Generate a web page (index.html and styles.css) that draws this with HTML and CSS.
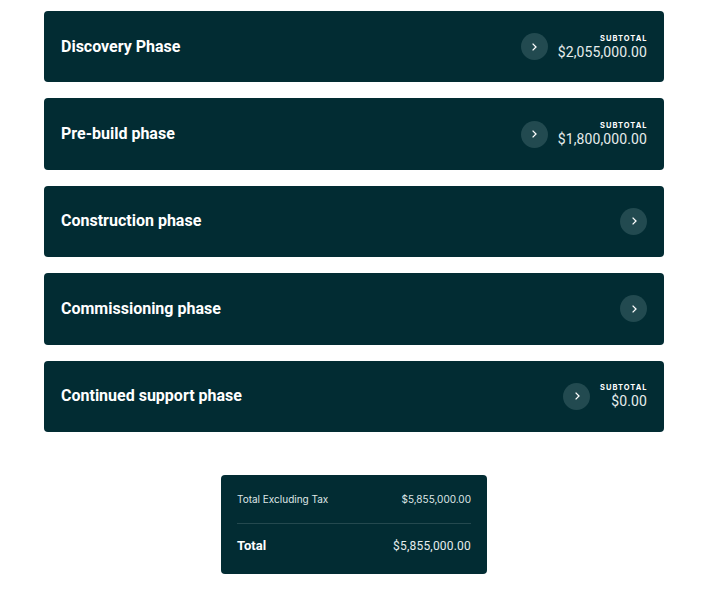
FILE: index.html
```html
<!DOCTYPE html>
<html lang="en">
<head>
<meta charset="utf-8">
<title>Phases</title>
<link rel="stylesheet" href="styles.css">
</head>
<body>
<main class="page">
  <section class="phases">
    <article class="phase">
      <h2 class="phase-title">Discovery Phase</h2>
      <div class="phase-side">
        <span class="chev"><svg viewBox="0 0 10 10" width="10" height="10"><path d="M3.6 1.6 7 5 3.6 8.4" fill="none" stroke="currentColor" stroke-width="1.3"/></svg></span>
        <div class="sub"><span class="sub-label">SUBTOTAL</span><span class="sub-value">$2,055,000.00</span></div>
      </div>
    </article>
    <article class="phase">
      <h2 class="phase-title">Pre-build phase</h2>
      <div class="phase-side">
        <span class="chev"><svg viewBox="0 0 10 10" width="10" height="10"><path d="M3.6 1.6 7 5 3.6 8.4" fill="none" stroke="currentColor" stroke-width="1.3"/></svg></span>
        <div class="sub"><span class="sub-label">SUBTOTAL</span><span class="sub-value">$1,800,000.00</span></div>
      </div>
    </article>
    <article class="phase">
      <h2 class="phase-title">Construction phase</h2>
      <div class="phase-side">
        <span class="chev"><svg viewBox="0 0 10 10" width="10" height="10"><path d="M3.6 1.6 7 5 3.6 8.4" fill="none" stroke="currentColor" stroke-width="1.3"/></svg></span>
      </div>
    </article>
    <article class="phase">
      <h2 class="phase-title">Commissioning phase</h2>
      <div class="phase-side">
        <span class="chev"><svg viewBox="0 0 10 10" width="10" height="10"><path d="M3.6 1.6 7 5 3.6 8.4" fill="none" stroke="currentColor" stroke-width="1.3"/></svg></span>
      </div>
    </article>
    <article class="phase">
      <h2 class="phase-title">Continued support phase</h2>
      <div class="phase-side">
        <span class="chev"><svg viewBox="0 0 10 10" width="10" height="10"><path d="M3.6 1.6 7 5 3.6 8.4" fill="none" stroke="currentColor" stroke-width="1.3"/></svg></span>
        <div class="sub"><span class="sub-label">SUBTOTAL</span><span class="sub-value">$0.00</span></div>
      </div>
    </article>
  </section>
  <section class="summary">
    <div class="row row-top"><span>Total Excluding Tax</span><span>$5,855,000.00</span></div>
    <div class="row row-total"><span class="total-label">Total</span><span class="total-value">$5,855,000.00</span></div>
  </section>
</main>
</body>
</html>
```
FILE: styles.css
```css
* { box-sizing: border-box; }
html, body { margin: 0; padding: 0; background: #fff; }
body { font-family: Roboto, "Liberation Sans", sans-serif; color: #fff; }
.page { width: 620px; margin-left: 44px; padding-top: 11px; }
.phases { display: flex; flex-direction: column; gap: 16px; }
.phase {
  height: 71.4px;
  background: #022c33;
  border-radius: 4px;
  padding: 0 17px;
  display: flex;
  align-items: center;
  justify-content: space-between;
}
.phase-title { margin: 0; font-size: 16px; font-weight: 700; line-height: 20px; }
.phase-side { display: flex; align-items: center; gap: 10px; }
.chev {
  width: 27px; height: 27px; border-radius: 50%;
  background: #224a50; color: #fff;
  display: flex; align-items: center; justify-content: center;
}
.sub { display: flex; flex-direction: column; align-items: flex-end; }
.sub-label { font-family: Inter, Roboto, sans-serif; font-size: 7.5px; font-weight: 700; letter-spacing: 1px; line-height: 10px; margin-right: -0.5px; }
.sub-value { font-size: 14px; line-height: 16px; color: #e6ecec; letter-spacing: 0.1px; }
.summary {
  width: 266px; height: 99px;
  margin: 43px 0 0 177px;
  background: #022c33;
  border-radius: 4px;
  padding: 0 16px;
}
.row { display: flex; justify-content: space-between; align-items: center; }
.row-top {
  height: 49px; font-family: Inter, Roboto, sans-serif;
  font-size: 10px; color: #dfe6e6;
  border-bottom: 1px solid #24494f;
}
.row-total { height: 44px; }
.total-label { font-size: 13px; font-weight: 700; }
.total-value { font-size: 12px; color: #e6ecec; letter-spacing: 0.2px; }
```
